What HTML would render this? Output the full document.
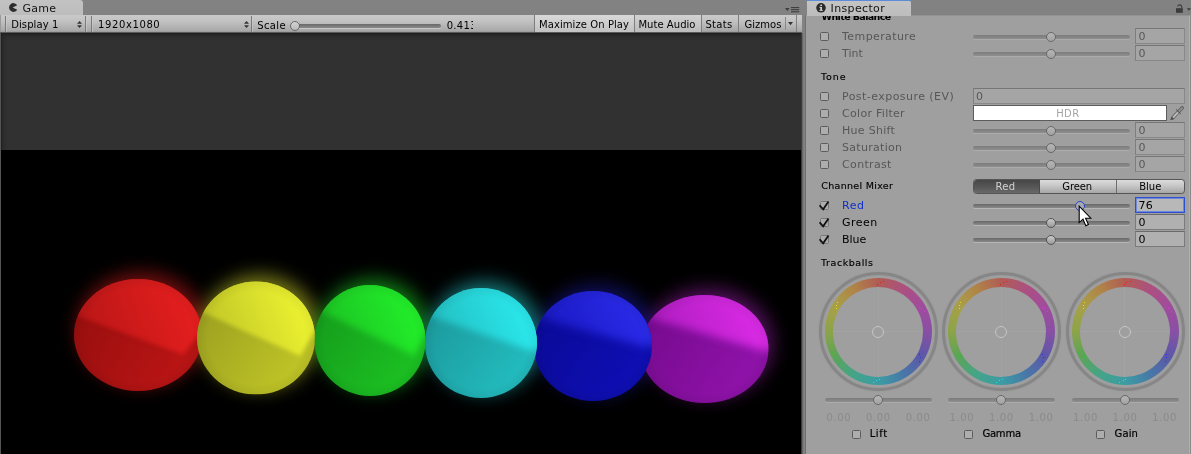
<!DOCTYPE html><html><head><meta charset="utf-8"><title>Unity</title><style>
*{box-sizing:border-box;margin:0;padding:0}
html,body{width:1191px;height:454px;overflow:hidden;background:#828282}
body{position:relative;font-family:"DejaVu Sans", "Liberation Sans", sans-serif;font-size:11px;color:#000;line-height:13px}
#w{position:absolute;left:0;top:0;width:1191px;height:454px;will-change:transform}
.a{position:absolute}
.t{position:absolute;white-space:nowrap;line-height:13px;height:13px}
.cb{position:absolute;width:9px;height:9px;border:1px solid #5c5c5c;background:#adadad;border-radius:1.5px}
.cb.on{border-color:#787878;background:#adadad}
.trk{position:absolute;height:4px;border-radius:2px;background:linear-gradient(#7c7c7c,#8e8e8e);box-shadow:0 1px 0 #acacac}
.trk.on{background:linear-gradient(#686868,#8a8a8a);box-shadow:0 1px 0 #b6b6b6}
.th.on{border-color:#555;background:linear-gradient(#cacaca,#9a9a9a)}
.th{position:absolute;width:10px;height:10px;border-radius:50%;border:1px solid #686868;background:linear-gradient(#b6b6b6,#a2a2a2)}
.nf{position:absolute;height:16px;border:1px solid #888;border-top-color:#767676;border-left-color:#7e7e7e;background:#a5a5a5}
.nf.on{background:#b0b0b0;border-color:#7a7a7a;border-top-color:#6a6a6a}
</style></head><body><div id="w"><div class="a" style="left:0;top:0;width:83px;height:15px;background:linear-gradient(#c3c3c3,#bcbcbc);border-radius:0 3px 0 0"></div>
<svg class="a" style="left:8px;top:3px" width="10" height="9" viewBox="0 0 10 9"><path d="M9.2 2.2A4.4 4.4 0 1 0 9.2 6.8L4.7 4.5Z" fill="#2c2c2c"/></svg>
<div class="t" style="left:22.4px;top:2px;font-size:11px;letter-spacing:0.3px;color:#141414;">Game</div>
<svg class="a" style="left:785px;top:7px" width="15" height="6" viewBox="0 0 15 6"><path d="M0 1h4.6L2.3 4Z" fill="#3e3e3e"/><rect x="6" y="0" width="8.2" height="1.1" fill="#3e3e3e"/><rect x="6" y="2.1" width="8.2" height="1.1" fill="#3e3e3e"/><rect x="6" y="4.2" width="8.2" height="1.1" fill="#3e3e3e"/></svg>
<div class="a" style="left:0;top:15px;width:802px;height:18px;background:linear-gradient(#cacaca 0%,#c2c2c2 35%,#aaaaaa 90%,#9a9a9a 100%);border-bottom:1px solid #5a5a5a"></div>
<div class="a" style="left:0;top:15px;width:1px;height:17px;background:#9a9a9a"></div>
<div class="a" style="left:5px;top:16px;width:1px;height:16px;background:#7a7a7a"></div>
<div class="a" style="left:6px;top:16px;width:1px;height:16px;background:#d0d0d0;opacity:.5"></div>
<div class="a" style="left:85px;top:16px;width:1px;height:16px;background:#7a7a7a"></div>
<div class="a" style="left:86px;top:16px;width:1px;height:16px;background:#d0d0d0;opacity:.5"></div>
<div class="a" style="left:91px;top:16px;width:1px;height:16px;background:#7a7a7a"></div>
<div class="a" style="left:92px;top:16px;width:1px;height:16px;background:#d0d0d0;opacity:.5"></div>
<div class="a" style="left:251px;top:16px;width:1px;height:16px;background:#7a7a7a"></div>
<div class="a" style="left:252px;top:16px;width:1px;height:16px;background:#d0d0d0;opacity:.5"></div>
<div class="t" style="left:11.2px;top:18px;font-size:10px;letter-spacing:0.1px;color:#000;">Display 1</div>
<div class="t" style="left:98.1px;top:18px;font-size:10px;letter-spacing:0.6px;color:#000;">1920x1080</div>
<svg class="a" style="left:77px;top:21px" width="5" height="7" viewBox="0 0 5 7"><path d="M0 2.8h5L2.5 0Z M0 4.2h5L2.5 7Z" fill="#333"/></svg>
<svg class="a" style="left:243.5px;top:21px" width="5" height="7" viewBox="0 0 5 7"><path d="M0 2.8h5L2.5 0Z M0 4.2h5L2.5 7Z" fill="#333"/></svg>
<div class="t" style="left:257.3px;top:18.5px;font-size:10px;letter-spacing:0.35px;color:#000;">Scale</div>
<div class="trk on" style="left:291px;top:24px;width:150px;box-shadow:0 1px 0 #c8c8c8"></div>
<div class="th" style="left:290px;top:21px;background:linear-gradient(#d4d4d4,#b8b8b8)"></div>
<div class="a" style="left:440px;top:15px;width:33px;height:17px;overflow:hidden">
<div class="t" style="left:6.7px;top:3.5px;font-size:10px;letter-spacing:0.3px">0.413</div></div>
<div class="a" style="left:534px;top:15px;width:100px;height:17px;background:linear-gradient(#d9d9d9,#c2c2c2)"></div>
<div class="a" style="left:534px;top:15px;width:1px;height:17px;background:#7e7e7e"></div>
<div class="t" style="left:539.0px;top:17.5px;font-size:10px;letter-spacing:0.08px;color:#000;">Maximize On Play</div>
<div class="a" style="left:634px;top:15px;width:67px;height:17px;background:linear-gradient(#d2d2d2,#bbbbbb)"></div>
<div class="a" style="left:634px;top:15px;width:1px;height:17px;background:#7e7e7e"></div>
<div class="t" style="left:638.4px;top:17.5px;font-size:10px;letter-spacing:0.05px;color:#000;">Mute Audio</div>
<div class="a" style="left:701px;top:15px;width:1px;height:17px;background:#7e7e7e"></div>
<div class="t" style="left:705.4px;top:17.5px;font-size:10px;letter-spacing:0.3px;color:#000;">Stats</div>
<div class="a" style="left:738px;top:15px;width:1px;height:17px;background:#7e7e7e"></div>
<div class="t" style="left:744.5px;top:17.5px;font-size:10px;letter-spacing:0px;color:#000;">Gizmos</div>
<div class="a" style="left:785px;top:17px;width:1px;height:13px;background:#8a8a8a"></div>
<svg class="a" style="left:788px;top:21.5px" width="5" height="4" viewBox="0 0 5 4"><path d="M0 0h5L2.5 3.2Z" fill="#333"/></svg>
<div class="a" style="left:796px;top:15px;width:1px;height:17px;background:#7e7e7e"></div>
<div class="a" style="left:1px;top:33px;width:801px;height:117px;background:linear-gradient(#1a1a1a 0,#262626 1.5px,#2d2d2d 4px,#313131 8px)"></div>
<div class="a" style="left:1px;top:33px;width:7px;height:117px;background:linear-gradient(90deg,rgba(26,26,26,.8) 0,rgba(38,38,38,.5) 2px,rgba(49,49,49,0) 7px)"></div>
<div class="a" style="left:0;top:150px;width:802px;height:304px;background:#000"></div>
<svg class="a" style="left:0;top:150px" width="802" height="304" viewBox="0 150 802 304"><defs><filter id="bl" x="-40%" y="-40%" width="180%" height="180%" color-interpolation-filters="sRGB"><feGaussianBlur stdDeviation="9"/></filter><filter id="f_red" x="-20%" y="-20%" width="140%" height="140%" color-interpolation-filters="sRGB"><feGaussianBlur stdDeviation="2.2"/></filter><clipPath id="c_red"><ellipse cx="138" cy="335" rx="64" ry="56"/></clipPath><linearGradient id="g_red" gradientUnits="userSpaceOnUse" x1="182.8" y1="290.2" x2="77.2" y2="329.4"><stop offset="0" stop-color="#e41e1e"/><stop offset="1" stop-color="#b81616"/></linearGradient><linearGradient id="b_red" gradientUnits="userSpaceOnUse" x1="74" y1="312.6" x2="170.0" y2="374.2"><stop offset="0" stop-color="#980e0e"/><stop offset="1" stop-color="#b81414"/></linearGradient><radialGradient id="r_red" cx="0.5" cy="0.5" r="0.5"><stop offset="0.82" stop-color="#000" stop-opacity="0"/><stop offset="1" stop-color="#000" stop-opacity="0.06"/></radialGradient><filter id="f_yel" x="-20%" y="-20%" width="140%" height="140%" color-interpolation-filters="sRGB"><feGaussianBlur stdDeviation="2.2"/></filter><clipPath id="c_yel"><ellipse cx="256" cy="338" rx="59" ry="56.5"/></clipPath><linearGradient id="g_yel" gradientUnits="userSpaceOnUse" x1="297.3" y1="292.8" x2="199.95" y2="332.35"><stop offset="0" stop-color="#ecf230"/><stop offset="1" stop-color="#bdc226"/></linearGradient><linearGradient id="b_yel" gradientUnits="userSpaceOnUse" x1="197" y1="315.4" x2="285.5" y2="377.55"><stop offset="0" stop-color="#9ca020"/><stop offset="1" stop-color="#bdc226"/></linearGradient><radialGradient id="r_yel" cx="0.5" cy="0.5" r="0.5"><stop offset="0.82" stop-color="#000" stop-opacity="0"/><stop offset="1" stop-color="#000" stop-opacity="0.06"/></radialGradient><filter id="f_grn" x="-20%" y="-20%" width="140%" height="140%" color-interpolation-filters="sRGB"><feGaussianBlur stdDeviation="3.5"/></filter><clipPath id="c_grn"><ellipse cx="370" cy="340.5" rx="55.5" ry="55.5"/></clipPath><linearGradient id="g_grn" gradientUnits="userSpaceOnUse" x1="408.85" y1="296.1" x2="317.275" y2="334.95"><stop offset="0" stop-color="#22ee2a"/><stop offset="1" stop-color="#1bbe22"/></linearGradient><linearGradient id="b_grn" gradientUnits="userSpaceOnUse" x1="314.5" y1="318.3" x2="397.75" y2="379.35"><stop offset="0" stop-color="#169d1c"/><stop offset="1" stop-color="#1bbe22"/></linearGradient><radialGradient id="r_grn" cx="0.5" cy="0.5" r="0.5"><stop offset="0.82" stop-color="#000" stop-opacity="0"/><stop offset="1" stop-color="#000" stop-opacity="0.06"/></radialGradient><filter id="f_mag" x="-20%" y="-20%" width="140%" height="140%" color-interpolation-filters="sRGB"><feGaussianBlur stdDeviation="4.5"/></filter><clipPath id="c_mag"><ellipse cx="704.5" cy="349" rx="64" ry="54"/></clipPath><linearGradient id="g_mag" gradientUnits="userSpaceOnUse" x1="749.3" y1="305.8" x2="643.7" y2="343.6"><stop offset="0" stop-color="#d82ae4"/><stop offset="1" stop-color="#a81aba"/></linearGradient><linearGradient id="b_mag" gradientUnits="userSpaceOnUse" x1="640.5" y1="327.4" x2="736.5" y2="386.8"><stop offset="0" stop-color="#760a8e"/><stop offset="1" stop-color="#8e12a8"/></linearGradient><radialGradient id="r_mag" cx="0.5" cy="0.5" r="0.5"><stop offset="0.82" stop-color="#000" stop-opacity="0"/><stop offset="1" stop-color="#000" stop-opacity="0.06"/></radialGradient><filter id="f_blu" x="-20%" y="-20%" width="140%" height="140%" color-interpolation-filters="sRGB"><feGaussianBlur stdDeviation="5"/></filter><clipPath id="c_blu"><ellipse cx="593" cy="346" rx="59" ry="55"/></clipPath><linearGradient id="g_blu" gradientUnits="userSpaceOnUse" x1="634.3" y1="302.0" x2="536.95" y2="340.5"><stop offset="0" stop-color="#2a2ae8"/><stop offset="1" stop-color="#1818c0"/></linearGradient><linearGradient id="b_blu" gradientUnits="userSpaceOnUse" x1="534" y1="324.0" x2="622.5" y2="384.5"><stop offset="0" stop-color="#0a0a98"/><stop offset="1" stop-color="#0e0eb2"/></linearGradient><radialGradient id="r_blu" cx="0.5" cy="0.5" r="0.5"><stop offset="0.82" stop-color="#000" stop-opacity="0"/><stop offset="1" stop-color="#000" stop-opacity="0.06"/></radialGradient><filter id="f_cya" x="-20%" y="-20%" width="140%" height="140%" color-interpolation-filters="sRGB"><feGaussianBlur stdDeviation="3.5"/></filter><clipPath id="c_cya"><ellipse cx="481" cy="343" rx="56" ry="55"/></clipPath><linearGradient id="g_cya" gradientUnits="userSpaceOnUse" x1="520.2" y1="299.0" x2="427.8" y2="337.5"><stop offset="0" stop-color="#2ae8ec"/><stop offset="1" stop-color="#22babd"/></linearGradient><linearGradient id="b_cya" gradientUnits="userSpaceOnUse" x1="425" y1="321.0" x2="509.0" y2="381.5"><stop offset="0" stop-color="#1c999c"/><stop offset="1" stop-color="#22babd"/></linearGradient><radialGradient id="r_cya" cx="0.5" cy="0.5" r="0.5"><stop offset="0.82" stop-color="#000" stop-opacity="0"/><stop offset="1" stop-color="#000" stop-opacity="0.06"/></radialGradient></defs><ellipse cx="142" cy="329" rx="65" ry="57" fill="#d91c1c" opacity="0.5" filter="url(#bl)"/><ellipse cx="260" cy="332" rx="60" ry="57.5" fill="#e0e62e" opacity="0.5" filter="url(#bl)"/><ellipse cx="374" cy="334.5" rx="56.5" ry="56.5" fill="#20e228" opacity="0.5" filter="url(#bl)"/><ellipse cx="708.5" cy="343" rx="65" ry="55" fill="#a020b0" opacity="0.5" filter="url(#bl)"/><ellipse cx="597" cy="340" rx="60" ry="56" fill="#1c1cb0" opacity="0.5" filter="url(#bl)"/><ellipse cx="485" cy="337" rx="57" ry="56" fill="#28dce0" opacity="0.5" filter="url(#bl)"/><g clip-path="url(#c_red)"><rect x="74" y="279" width="128" height="112" fill="url(#b_red)"/><polygon points="60.0,265.0 216.0,265.0 216.0,313.9 182.8,354.6 60.0,309.7" fill="url(#g_red)" filter="url(#f_red)"/><ellipse cx="138" cy="335" rx="64" ry="56" fill="url(#r_red)"/></g><g clip-path="url(#c_yel)"><rect x="197" y="281.5" width="118" height="113.0" fill="url(#b_yel)"/><polygon points="183.0,267.5 329.0,267.5 329.0,307.6 300.2,356.1 183.0,303.5" fill="url(#g_yel)" filter="url(#f_yel)"/><ellipse cx="256" cy="338" rx="59" ry="56.5" fill="url(#r_yel)"/></g><g clip-path="url(#c_grn)"><rect x="314.5" y="285.0" width="111.0" height="111.0" fill="url(#b_grn)"/><polygon points="300.5,271.0 439.5,271.0 439.5,311.6 414.4,355.5 300.5,301.7" fill="url(#g_grn)" filter="url(#f_grn)"/><ellipse cx="370" cy="340.5" rx="55.5" ry="55.5" fill="url(#r_grn)"/></g><g clip-path="url(#c_mag)"><rect x="640.5" y="295" width="128" height="108" fill="url(#b_mag)"/><polygon points="626.5,281.0 782.5,281.0 782.5,346.3 765.3,351.2 626.5,311.5" fill="url(#g_mag)" filter="url(#f_mag)"/><ellipse cx="704.5" cy="349" rx="64" ry="54" fill="url(#r_mag)"/></g><g clip-path="url(#c_blu)"><rect x="534" y="291" width="118" height="110" fill="url(#b_blu)"/><polygon points="520.0,277.0 666.0,277.0 666.0,343.2 646.1,347.1 520.0,312.5" fill="url(#g_blu)" filter="url(#f_blu)"/><ellipse cx="593" cy="346" rx="59" ry="55" fill="url(#r_blu)"/></g><g clip-path="url(#c_cya)"><rect x="425" y="288" width="112" height="110" fill="url(#b_cya)"/><polygon points="411.0,274.0 551.0,274.0 551.0,345.8 532.5,351.2 411.0,309.6" fill="url(#g_cya)" filter="url(#f_cya)"/><ellipse cx="481" cy="343" rx="56" ry="55" fill="url(#r_cya)"/></g></svg>
<div class="a" style="left:0;top:33px;width:1px;height:421px;background:#555"></div>
<div class="a" style="left:801px;top:33px;width:4px;height:421px;background:linear-gradient(90deg,#1a1a1a 0,#5c5c5c 1px,#7c7c7c 2.5px,#868686 4px)"></div>
<div class="a" style="left:805px;top:15px;width:386px;height:439px;background:#9f9f9f;border-left:1px solid #707070;border-top:1px solid #929292"></div>
<div class="a" style="left:1189px;top:16px;width:1px;height:438px;background:#b0b0b0"></div><div class="a" style="left:1190px;top:16px;width:1px;height:438px;background:#8a8a8a"></div>
<div class="a" style="left:807px;top:0;width:104px;height:16px;background:linear-gradient(#c4c4c4,#bdbdbd);border-top:1px solid #5a8cd8;border-radius:0 2px 0 0"></div>
<svg class="a" style="left:815.6px;top:2.7px" width="10" height="10" viewBox="0 0 10 10"><circle cx="5" cy="4.8" r="4.8" fill="#2a2a2a"/><rect x="4.3" y="4" width="1.7" height="3.6" fill="#d0d0d0"/><rect x="3.4" y="3.8" width="2" height="0.9" fill="#d0d0d0"/><rect x="3.4" y="6.9" width="3.4" height="0.9" fill="#d0d0d0"/><rect x="4.3" y="1.6" width="1.7" height="1.4" fill="#d0d0d0"/></svg>
<div class="t" style="left:830.6px;top:2px;font-size:11px;letter-spacing:0.35px;color:#141414;">Inspector</div>
<svg class="a" style="left:1175px;top:3px" width="16" height="11" viewBox="0 0 16 11"><path d="M2.6 3.2a2.2 2.2 0 0 1 4.2 0.6V5.5" fill="none" stroke="#3c3c3c" stroke-width="1.1"/><rect x="1" y="5.2" width="6.8" height="4.6" fill="#3c3c3c"/><path d="M11.8 5.2h4.2l-2.1 2.6Z" fill="#3c3c3c"/></svg>
<div class="a" style="left:808px;top:16px;width:383px;height:6px;overflow:hidden"><div class="t" style="left:13.5px;top:-6px;letter-spacing:-0.6px;font-size:9.5px;font-weight:bold">White Balance</div></div>
<div class="cb" style="left:820px;top:32px"></div>
<div class="t" style="left:842.1px;top:30px;font-size:11px;letter-spacing:0.4px;color:#575757;">Temperature</div>
<div class="trk" style="left:973px;top:35px;width:157px"></div>
<div class="th" style="left:1046px;top:32px"></div>
<div class="nf" style="left:1135px;top:28px;width:50px"></div>
<div class="t" style="left:1138.4px;top:30px;font-size:11px;letter-spacing:0.3px;color:#575757;">0</div>
<div class="cb" style="left:820px;top:49px"></div>
<div class="t" style="left:842.1px;top:47px;font-size:11px;letter-spacing:0.0px;color:#575757;">Tint</div>
<div class="trk" style="left:973px;top:52px;width:157px"></div>
<div class="th" style="left:1046px;top:49px"></div>
<div class="nf" style="left:1135px;top:45px;width:50px"></div>
<div class="t" style="left:1138.4px;top:47px;font-size:11px;letter-spacing:0.3px;color:#575757;">0</div>
<div class="t" style="left:820.9px;top:70px;font-size:9.5px;letter-spacing:0.95px;color:#000;-webkit-text-stroke:0.15px #000">Tone</div>
<div class="cb" style="left:820px;top:92px"></div>
<div class="t" style="left:842.0px;top:90px;font-size:11px;letter-spacing:0.45px;color:#575757;">Post-exposure (EV)</div>
<div class="nf" style="left:973px;top:88px;width:212px"></div>
<div class="t" style="left:976.1px;top:90px;font-size:11px;letter-spacing:0px;color:#575757;">0</div>
<div class="cb" style="left:820px;top:109px"></div>
<div class="t" style="left:842.1px;top:107px;font-size:11px;letter-spacing:0.28px;color:#575757;">Color Filter</div>
<div class="a" style="left:973px;top:105px;width:194px;height:16px;background:#fff;border:1px solid #5c5c5c"></div>
<div class="t" style="left:1056.2px;top:107px;font-size:10px;letter-spacing:0.4px;color:#a4a4a4;">HDR</div>
<svg class="a" style="left:1170px;top:105px" width="15" height="16" viewBox="0 0 15 16"><g stroke-linecap="round"><path d="M0.9 14.8L3.4 13.6L2.2 12.4Z" fill="#444" stroke="#444" stroke-width="0.6"/><line x1="2.7" y1="12.9" x2="12.2" y2="2.9" stroke="#525252" stroke-width="3.4"/><line x1="3" y1="12.6" x2="8.2" y2="7.1" stroke="#bebebe" stroke-width="2.1" stroke-linecap="butt"/><line x1="8.6" y1="6.7" x2="12.1" y2="3" stroke="#8e8e8e" stroke-width="2"/><line x1="6.3" y1="4.6" x2="10.6" y2="8.7" stroke="#4c4c4c" stroke-width="0.9"/></g></svg>
<div class="cb" style="left:820px;top:126px"></div>
<div class="t" style="left:842.0px;top:124px;font-size:11px;letter-spacing:0.3px;color:#575757;">Hue Shift</div>
<div class="trk" style="left:973px;top:129px;width:157px"></div>
<div class="th" style="left:1046px;top:126px"></div>
<div class="nf" style="left:1135px;top:122px;width:50px"></div>
<div class="t" style="left:1138.4px;top:124px;font-size:11px;letter-spacing:0.3px;color:#575757;">0</div>
<div class="cb" style="left:820px;top:143px"></div>
<div class="t" style="left:842.0px;top:141px;font-size:11px;letter-spacing:0.3px;color:#575757;">Saturation</div>
<div class="trk" style="left:973px;top:146px;width:157px"></div>
<div class="th" style="left:1046px;top:143px"></div>
<div class="nf" style="left:1135px;top:139px;width:50px"></div>
<div class="t" style="left:1138.4px;top:141px;font-size:11px;letter-spacing:0.3px;color:#575757;">0</div>
<div class="cb" style="left:820px;top:160px"></div>
<div class="t" style="left:842.1px;top:158px;font-size:11px;letter-spacing:0.33px;color:#575757;">Contrast</div>
<div class="trk" style="left:973px;top:163px;width:157px"></div>
<div class="th" style="left:1046px;top:160px"></div>
<div class="nf" style="left:1135px;top:156px;width:50px"></div>
<div class="t" style="left:1138.4px;top:158px;font-size:11px;letter-spacing:0.3px;color:#575757;">0</div>
<div class="t" style="left:821.3px;top:179px;font-size:9.5px;letter-spacing:0.3px;color:#000;-webkit-text-stroke:0.15px #000">Channel Mixer</div>
<div class="a" style="left:973px;top:179px;width:212px;height:15px;border:1px solid #555;border-radius:3.5px;background:linear-gradient(#dcdcdc,#c4c4c4 50%,#a6a6a6);overflow:hidden"><div class="a" style="left:-1px;top:-1px;width:67px;height:15px;background:linear-gradient(#444,#555 50%,#6c6c6c);border-right:1px solid #4a4a4a"></div><div class="a" style="left:142px;top:0;width:1px;height:13px;background:#6e6e6e"></div></div>
<div class="t" style="left:995.5px;top:180px;font-size:10px;letter-spacing:0.25px;color:#d2d2d2;">Red</div>
<div class="t" style="left:1062.3px;top:180px;font-size:10px;letter-spacing:-0.1px;color:#000;">Green</div>
<div class="t" style="left:1139.2px;top:180px;font-size:10px;letter-spacing:0px;color:#000;">Blue</div>
<div class="cb on" style="left:820px;top:201px"></div>
<svg class="a" style="left:819px;top:199px" width="12" height="12" viewBox="0 0 12 12"><path d="M0.5 6.3L4.2 10.3L9.5 2.5" fill="none" stroke="#111" stroke-width="1.8"/></svg>
<div class="t" style="left:842.0px;top:199px;font-size:11px;letter-spacing:0.6px;color:#1030c8;">Red</div>
<div class="trk on" style="left:973px;top:204px;width:157px"></div>
<div class="th" style="left:1075px;top:201px;border:1.6px solid #2446c8;background:#a8a8b0"></div>
<div class="nf on" style="left:1135px;top:197px;width:50px;border:1px solid #2c50d0;box-shadow:0 0 0 1px #7088d8 inset;background:#b8b8b8"></div>
<div class="t" style="left:1138.4px;top:199px;font-size:11px;letter-spacing:0.3px;color:#000;">76</div>
<div class="cb on" style="left:820px;top:218px"></div>
<svg class="a" style="left:819px;top:216px" width="12" height="12" viewBox="0 0 12 12"><path d="M0.5 6.3L4.2 10.3L9.5 2.5" fill="none" stroke="#111" stroke-width="1.8"/></svg>
<div class="t" style="left:842.0px;top:216px;font-size:11px;letter-spacing:0.45px;color:#000;">Green</div>
<div class="trk on" style="left:973px;top:221px;width:157px"></div>
<div class="th on" style="left:1046px;top:218px"></div>
<div class="nf on" style="left:1135px;top:214px;width:50px"></div>
<div class="t" style="left:1138.4px;top:216px;font-size:11px;letter-spacing:0.3px;color:#000;">0</div>
<div class="cb on" style="left:820px;top:235px"></div>
<svg class="a" style="left:819px;top:233px" width="12" height="12" viewBox="0 0 12 12"><path d="M0.5 6.3L4.2 10.3L9.5 2.5" fill="none" stroke="#111" stroke-width="1.8"/></svg>
<div class="t" style="left:842.0px;top:233px;font-size:11px;letter-spacing:0.0px;color:#000;">Blue</div>
<div class="trk on" style="left:973px;top:238px;width:157px"></div>
<div class="th on" style="left:1046px;top:235px"></div>
<div class="nf on" style="left:1135px;top:231px;width:50px"></div>
<div class="t" style="left:1138.4px;top:233px;font-size:11px;letter-spacing:0.3px;color:#000;">0</div>
<div class="t" style="left:821.1px;top:256px;font-size:9.5px;letter-spacing:0.55px;color:#000;-webkit-text-stroke:0.15px #000">Trackballs</div>
<div class="a" style="left:818.9px;top:272.3px;width:119px;height:119px;border-radius:50%;border:3.5px solid #868686;box-shadow:0 0 1.5px #909090, inset 0 0 1.5px #909090"></div>
<div class="a" style="left:824.9px;top:278.3px;width:107px;height:107px;border-radius:50%;background:conic-gradient(from 0deg,#b05c55 0deg,#ac5080 30deg,#a04c9c 60deg,#8850a4 90deg,#5c58a8 120deg,#4878a8 150deg,#3c9ca4 180deg,#44a488 210deg,#5ca458 240deg,#8ca448 270deg,#a8a048 300deg,#b08448 330deg,#b05c55 360deg)"></div>
<div class="a" style="left:833.4px;top:286.8px;width:90px;height:90px;border-radius:50%;background:#9f9f9f"></div>
<div class="a" style="left:833.4px;top:331px;width:90px;height:1px;background:#a3a3a3"></div>
<div class="a" style="left:878px;top:286.8px;width:1px;height:90px;background:#a3a3a3"></div>
<div class="a" style="left:872.4px;top:325.8px;width:12px;height:12px;border-radius:50%;border:1px solid #c6c6c6;background:#9f9f9f"></div>
<div class="a" style="left:879.6px;top:282.3px;width:1px;height:1px;background:#d82020"></div>
<div class="a" style="left:883.2px;top:281.1px;width:1px;height:1px;background:#d82020"></div>
<div class="a" style="left:877.1px;top:283.8px;width:1px;height:1px;background:#d82020"></div>
<div class="a" style="left:921.2px;top:308.3px;width:1px;height:1px;background:#d040e0"></div>
<div class="a" style="left:924.0px;top:310.8px;width:1px;height:1px;background:#d040e0"></div>
<div class="a" style="left:918.6px;top:306.8px;width:1px;height:1px;background:#d040e0"></div>
<div class="a" style="left:919.5px;top:357.3px;width:1px;height:1px;background:#3030e0"></div>
<div class="a" style="left:918.8px;top:361.0px;width:1px;height:1px;background:#3030e0"></div>
<div class="a" style="left:919.4px;top:354.3px;width:1px;height:1px;background:#3030e0"></div>
<div class="a" style="left:876.2px;top:380.3px;width:1px;height:1px;background:#20e0e0"></div>
<div class="a" style="left:872.6px;top:381.5px;width:1px;height:1px;background:#20e0e0"></div>
<div class="a" style="left:878.7px;top:378.8px;width:1px;height:1px;background:#20e0e0"></div>
<div class="a" style="left:834.6px;top:354.3px;width:1px;height:1px;background:#30c030"></div>
<div class="a" style="left:831.8px;top:351.8px;width:1px;height:1px;background:#30c030"></div>
<div class="a" style="left:837.2px;top:355.8px;width:1px;height:1px;background:#30c030"></div>
<div class="a" style="left:836.3px;top:305.3px;width:1px;height:1px;background:#e0e020"></div>
<div class="a" style="left:837.0px;top:301.6px;width:1px;height:1px;background:#e0e020"></div>
<div class="a" style="left:836.4px;top:308.3px;width:1px;height:1px;background:#e0e020"></div>
<div class="trk" style="left:824.9px;top:398px;width:107px"></div>
<div class="th" style="left:873.4px;top:395px"></div>
<div class="t" style="left:818.9px;top:411px;width:40px;text-align:center;color:#8a8a8a;font-size:10px;letter-spacing:0.65px">0.00</div>
<div class="t" style="left:858.4px;top:411px;width:40px;text-align:center;color:#8a8a8a;font-size:10px;letter-spacing:0.65px">0.00</div>
<div class="t" style="left:898.1px;top:411px;width:40px;text-align:center;color:#8a8a8a;font-size:10px;letter-spacing:0.65px">0.00</div>
<div class="cb" style="left:852px;top:430px"></div>
<div class="t" style="left:869.7px;top:427px;font-size:10px;letter-spacing:0.6px;color:#000;-webkit-text-stroke:0.2px #000">Lift</div>
<div class="a" style="left:941.9px;top:272.3px;width:119px;height:119px;border-radius:50%;border:3.5px solid #868686;box-shadow:0 0 1.5px #909090, inset 0 0 1.5px #909090"></div>
<div class="a" style="left:947.9px;top:278.3px;width:107px;height:107px;border-radius:50%;background:conic-gradient(from 0deg,#b05c55 0deg,#ac5080 30deg,#a04c9c 60deg,#8850a4 90deg,#5c58a8 120deg,#4878a8 150deg,#3c9ca4 180deg,#44a488 210deg,#5ca458 240deg,#8ca448 270deg,#a8a048 300deg,#b08448 330deg,#b05c55 360deg)"></div>
<div class="a" style="left:956.4px;top:286.8px;width:90px;height:90px;border-radius:50%;background:#9f9f9f"></div>
<div class="a" style="left:956.4px;top:331px;width:90px;height:1px;background:#a3a3a3"></div>
<div class="a" style="left:1001px;top:286.8px;width:1px;height:90px;background:#a3a3a3"></div>
<div class="a" style="left:995.4px;top:325.8px;width:12px;height:12px;border-radius:50%;border:1px solid #c6c6c6;background:#9f9f9f"></div>
<div class="a" style="left:1002.6px;top:282.3px;width:1px;height:1px;background:#d82020"></div>
<div class="a" style="left:1006.2px;top:281.1px;width:1px;height:1px;background:#d82020"></div>
<div class="a" style="left:1000.1px;top:283.8px;width:1px;height:1px;background:#d82020"></div>
<div class="a" style="left:1044.2px;top:308.3px;width:1px;height:1px;background:#d040e0"></div>
<div class="a" style="left:1047.0px;top:310.8px;width:1px;height:1px;background:#d040e0"></div>
<div class="a" style="left:1041.6px;top:306.8px;width:1px;height:1px;background:#d040e0"></div>
<div class="a" style="left:1042.5px;top:357.3px;width:1px;height:1px;background:#3030e0"></div>
<div class="a" style="left:1041.8px;top:361.0px;width:1px;height:1px;background:#3030e0"></div>
<div class="a" style="left:1042.4px;top:354.3px;width:1px;height:1px;background:#3030e0"></div>
<div class="a" style="left:999.2px;top:380.3px;width:1px;height:1px;background:#20e0e0"></div>
<div class="a" style="left:995.6px;top:381.5px;width:1px;height:1px;background:#20e0e0"></div>
<div class="a" style="left:1001.7px;top:378.8px;width:1px;height:1px;background:#20e0e0"></div>
<div class="a" style="left:957.6px;top:354.3px;width:1px;height:1px;background:#30c030"></div>
<div class="a" style="left:954.8px;top:351.8px;width:1px;height:1px;background:#30c030"></div>
<div class="a" style="left:960.2px;top:355.8px;width:1px;height:1px;background:#30c030"></div>
<div class="a" style="left:959.3px;top:305.3px;width:1px;height:1px;background:#e0e020"></div>
<div class="a" style="left:960.0px;top:301.6px;width:1px;height:1px;background:#e0e020"></div>
<div class="a" style="left:959.4px;top:308.3px;width:1px;height:1px;background:#e0e020"></div>
<div class="trk" style="left:947.9px;top:398px;width:107px"></div>
<div class="th" style="left:996.4px;top:395px"></div>
<div class="t" style="left:941.9px;top:411px;width:40px;text-align:center;color:#8a8a8a;font-size:10px;letter-spacing:0.65px">1.00</div>
<div class="t" style="left:981.4px;top:411px;width:40px;text-align:center;color:#8a8a8a;font-size:10px;letter-spacing:0.65px">1.00</div>
<div class="t" style="left:1021.1px;top:411px;width:40px;text-align:center;color:#8a8a8a;font-size:10px;letter-spacing:0.65px">1.00</div>
<div class="cb" style="left:964px;top:430px"></div>
<div class="t" style="left:982.4px;top:427px;font-size:10px;letter-spacing:-0.2px;color:#000;-webkit-text-stroke:0.2px #000">Gamma</div>
<div class="a" style="left:1065.5px;top:272.3px;width:119px;height:119px;border-radius:50%;border:3.5px solid #868686;box-shadow:0 0 1.5px #909090, inset 0 0 1.5px #909090"></div>
<div class="a" style="left:1071.5px;top:278.3px;width:107px;height:107px;border-radius:50%;background:conic-gradient(from 0deg,#b05c55 0deg,#ac5080 30deg,#a04c9c 60deg,#8850a4 90deg,#5c58a8 120deg,#4878a8 150deg,#3c9ca4 180deg,#44a488 210deg,#5ca458 240deg,#8ca448 270deg,#a8a048 300deg,#b08448 330deg,#b05c55 360deg)"></div>
<div class="a" style="left:1080px;top:286.8px;width:90px;height:90px;border-radius:50%;background:#9f9f9f"></div>
<div class="a" style="left:1080px;top:331px;width:90px;height:1px;background:#a3a3a3"></div>
<div class="a" style="left:1124px;top:286.8px;width:1px;height:90px;background:#a3a3a3"></div>
<div class="a" style="left:1119px;top:325.8px;width:12px;height:12px;border-radius:50%;border:1px solid #c6c6c6;background:#9f9f9f"></div>
<div class="a" style="left:1126.2px;top:282.3px;width:1px;height:1px;background:#d82020"></div>
<div class="a" style="left:1129.8px;top:281.1px;width:1px;height:1px;background:#d82020"></div>
<div class="a" style="left:1123.7px;top:283.8px;width:1px;height:1px;background:#d82020"></div>
<div class="a" style="left:1167.8px;top:308.3px;width:1px;height:1px;background:#d040e0"></div>
<div class="a" style="left:1170.6px;top:310.8px;width:1px;height:1px;background:#d040e0"></div>
<div class="a" style="left:1165.2px;top:306.8px;width:1px;height:1px;background:#d040e0"></div>
<div class="a" style="left:1166.1px;top:357.3px;width:1px;height:1px;background:#3030e0"></div>
<div class="a" style="left:1165.4px;top:361.0px;width:1px;height:1px;background:#3030e0"></div>
<div class="a" style="left:1166.0px;top:354.3px;width:1px;height:1px;background:#3030e0"></div>
<div class="a" style="left:1122.8px;top:380.3px;width:1px;height:1px;background:#20e0e0"></div>
<div class="a" style="left:1119.2px;top:381.5px;width:1px;height:1px;background:#20e0e0"></div>
<div class="a" style="left:1125.3px;top:378.8px;width:1px;height:1px;background:#20e0e0"></div>
<div class="a" style="left:1081.2px;top:354.3px;width:1px;height:1px;background:#30c030"></div>
<div class="a" style="left:1078.4px;top:351.8px;width:1px;height:1px;background:#30c030"></div>
<div class="a" style="left:1083.8px;top:355.8px;width:1px;height:1px;background:#30c030"></div>
<div class="a" style="left:1082.9px;top:305.3px;width:1px;height:1px;background:#e0e020"></div>
<div class="a" style="left:1083.6px;top:301.6px;width:1px;height:1px;background:#e0e020"></div>
<div class="a" style="left:1083.0px;top:308.3px;width:1px;height:1px;background:#e0e020"></div>
<div class="trk" style="left:1071.5px;top:398px;width:107px"></div>
<div class="th" style="left:1120px;top:395px"></div>
<div class="t" style="left:1065.5px;top:411px;width:40px;text-align:center;color:#8a8a8a;font-size:10px;letter-spacing:0.65px">1.00</div>
<div class="t" style="left:1105px;top:411px;width:40px;text-align:center;color:#8a8a8a;font-size:10px;letter-spacing:0.65px">1.00</div>
<div class="t" style="left:1144.7px;top:411px;width:40px;text-align:center;color:#8a8a8a;font-size:10px;letter-spacing:0.65px">1.00</div>
<div class="cb" style="left:1096px;top:430px"></div>
<div class="t" style="left:1114.5px;top:427px;font-size:10px;letter-spacing:0.15px;color:#000;-webkit-text-stroke:0.2px #000">Gain</div>
<svg class="a" style="left:1078px;top:204.5px" width="15" height="23" viewBox="0 0 15 23"><path d="M1.2 1.2V17.6L5 14.2L7.8 20.8L10.4 19.6L7.6 13.2H12.8Z" fill="#fff" stroke="#000" stroke-width="1.1"/></svg></div></body></html>
